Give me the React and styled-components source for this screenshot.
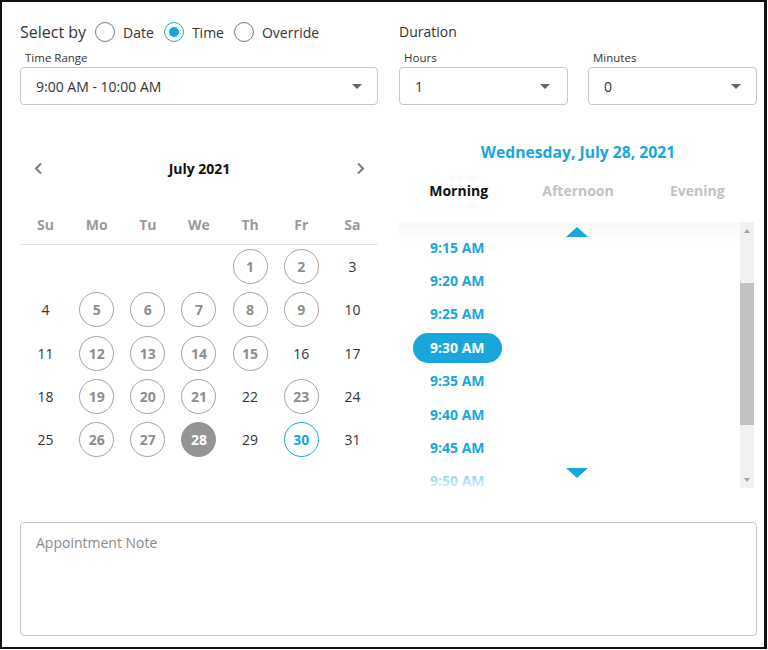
import React from 'react';
import styled, { createGlobalStyle } from 'styled-components';

const GlobalStyle = createGlobalStyle`
  body {
    margin: 0;
    background: #fff;
    font-family: "Open Sans", "Noto Sans", sans-serif;
    color: #333;
  }
`;

const BLUE = '#18a6dc';

const Frame = styled.div`
  box-sizing: border-box;
  width: 767px;
  height: 649px;
  border: 2px solid #111;
  border-right-width: 3px;
  padding: 20px 7px 0 18px;
  background: #fff;
`;

const Columns = styled.div`
  display: grid;
  grid-template-columns: 358px 358px;
  column-gap: 21px;
  align-items: start;
`;

const Column = styled.div`
  display: flex;
  flex-direction: column;
`;

const SelectByRow = styled.div`
  height: 20px;
  display: flex;
  align-items: center;
  font-size: 14px;
`;

const SelectByLabel = styled.span`
  font-size: 16px;
  margin-right: 9px;
`;

const RadioOption = styled.label`
  display: flex;
  align-items: center;
  gap: 8px;
  margin-right: 10px;
`;

const RadioCircle = styled.span`
  box-sizing: border-box;
  width: 20px;
  height: 20px;
  border-radius: 50%;
  border: 1.5px solid ${p => (p.checked ? BLUE : '#7a7a7a')};
  display: flex;
  align-items: center;
  justify-content: center;
  &::after {
    content: '';
    width: 10px;
    height: 10px;
    border-radius: 50%;
    background: ${p => (p.checked ? BLUE : 'transparent')};
  }
`;

const SectionTitle = styled.div`
  height: 20px;
  line-height: 20px;
  font-size: 14px;
`;

const FieldGroup = styled.div`
  display: grid;
  grid-template-columns: 169px 169px;
  column-gap: 20px;
`;

const Field = styled.div`
  display: flex;
  flex-direction: column;
`;

const FieldLabel = styled.div`
  font-size: 11.5px;
  line-height: 16px;
  margin: 8px 0 1px 5px;
  color: #333;
`;

const SelectBox = styled.div`
  box-sizing: border-box;
  height: 38px;
  border: 1px solid #c6c6c6;
  border-radius: 4px;
  display: flex;
  align-items: center;
  justify-content: space-between;
  padding: 0 ${p => p.padRight || 15}px 0 ${p => p.padLeft || 15}px;
  font-size: 14px;
  color: #333;
`;

const Caret = styled.span`
  width: 0;
  height: 0;
  border-left: 5px solid transparent;
  border-right: 5px solid transparent;
  border-top: 5px solid #666;
`;

const CalNav = styled.div`
  margin-top: 53px;
  height: 20px;
  display: flex;
  align-items: center;
  justify-content: space-between;
  padding: 0 12px 0 13px;
`;

const MonthTitle = styled.div`
  font-size: 14px;
  font-weight: 700;
  color: #111;
`;

const WeekHeader = styled.div`
  margin-top: 37px;
  display: grid;
  grid-template-columns: repeat(7, 1fr);
  height: 20px;
  line-height: 20px;
  padding-bottom: 9px;
  border-bottom: 1px solid #e2e2e2;
`;

const WeekDay = styled.div`
  text-align: center;
  font-size: 14px;
  font-weight: 700;
  color: #9a9a9a;
`;

const DaysGrid = styled.div`
  display: grid;
  grid-template-columns: repeat(7, 1fr);
  grid-auto-rows: 43.3px;
`;

const DayCell = styled.div`
  display: flex;
  align-items: center;
  justify-content: center;
`;

const dayStyles = {
  plain: `border: none; color: #333; font-weight: 400;`,
  open: `border: 1.5px solid #a3a3a3; color: #8e8e8e; font-weight: 700;`,
  selected: `border: 1.5px solid #949494; background: #949494; color: #fff; font-weight: 700;`,
  today: `border: 1.5px solid ${BLUE}; color: ${BLUE}; font-weight: 700;`,
};

const Day = styled.div`
  box-sizing: border-box;
  width: 35px;
  height: 35px;
  border-radius: 50%;
  display: flex;
  align-items: center;
  justify-content: center;
  font-size: 14px;
  ${p => dayStyles[p.kind]}
`;

const DateTitle = styled.div`
  margin-top: 37px;
  height: 20px;
  line-height: 20px;
  text-align: center;
  font-size: 15.7px;
  font-weight: 700;
  color: ${BLUE};
`;

const Tabs = styled.div`
  margin-top: 19px;
  display: grid;
  grid-template-columns: repeat(3, 1fr);
  height: 20px;
  line-height: 20px;
`;

const Tab = styled.div`
  text-align: center;
  font-size: 14px;
  font-weight: 700;
  color: ${p => (p.active ? '#111' : '#c2c2c2')};
`;

const TimeList = styled.div`
  position: relative;
  margin-top: 21px;
  height: 266px;
  display: flex;
  overflow: hidden;
`;

const TimeItems = styled.div`
  position: relative;
  flex: 1;
  padding-top: 9px;
`;

const TimeRow = styled.div`
  height: 33.4px;
  display: flex;
  align-items: center;
  padding-left: 14px;
`;

const TimeChip = styled.div`
  height: 30px;
  line-height: 30px;
  padding: 0 17px;
  border-radius: 15px;
  font-size: 14px;
  font-weight: 700;
  color: ${p => (p.selected ? '#fff' : BLUE)};
  background: ${p => (p.selected ? BLUE : 'transparent')};
`;

const FadeTop = styled.div`
  position: absolute;
  left: 0;
  right: 0;
  top: 0;
  height: 20px;
  background: linear-gradient(to bottom, #f7f7f7, rgba(255, 255, 255, 0));
`;

const FadeBottom = styled.div`
  position: absolute;
  left: 0;
  right: 0;
  bottom: 0;
  height: 32px;
  background: linear-gradient(to bottom, rgba(255, 255, 255, 0), rgba(255, 255, 255, 0.85));
`;

const ArrowUp = styled.div`
  position: absolute;
  left: 167px;
  top: 5px;
  width: 0;
  height: 0;
  border-left: 11.5px solid transparent;
  border-right: 11.5px solid transparent;
  border-bottom: 10.5px solid ${BLUE};
`;

const ArrowDown = styled.div`
  position: absolute;
  left: 167px;
  top: 246px;
  width: 0;
  height: 0;
  border-left: 11.5px solid transparent;
  border-right: 11.5px solid transparent;
  border-top: 10.5px solid ${BLUE};
`;

const ScrollTrack = styled.div`
  width: 14px;
  margin-right: 3px;
  background: #f1f1f1;
  display: flex;
  flex-direction: column;
`;

const ScrollButton = styled.div`
  height: 17px;
  display: flex;
  align-items: center;
  justify-content: center;
  &::after {
    content: '';
    width: 0;
    height: 0;
    border-left: 3.5px solid transparent;
    border-right: 3.5px solid transparent;
    ${p => (p.down ? 'border-top: 4px solid #a3a3a3;' : 'border-bottom: 4px solid #a3a3a3;')}
  }
`;

const ScrollBody = styled.div`
  flex: 1;
  padding-top: 44px;
`;

const Thumb = styled.div`
  height: 142px;
  background: #c1c1c1;
`;

const NoteArea = styled.textarea`
  display: block;
  box-sizing: border-box;
  margin-top: 34px;
  width: 737px;
  height: 114px;
  border: 1px solid #c6c6c6;
  border-radius: 4px;
  padding: 10px 15px;
  resize: none;
  font-family: "Open Sans", "Noto Sans", sans-serif;
  font-size: 14px;
  line-height: 20px;
  color: #333;
  &::placeholder {
    color: #8a8a8a;
  }
`;

const Chevron = ({ dir }) => (
  <svg width="10" height="13" viewBox="0 0 10 13">
    <polyline
      points={dir === 'left' ? '8,1.5 3,6.5 8,11.5' : '2,1.5 7,6.5 2,11.5'}
      fill="none"
      stroke="#7d7d7d"
      strokeWidth="2"
    />
  </svg>
);

const openDays = [1, 2, 5, 6, 7, 8, 9, 12, 13, 14, 15, 19, 20, 21, 23, 26, 27];

function dayKind(d) {
  if (d === 28) return 'selected';
  if (d === 30) return 'today';
  if (openDays.includes(d)) return 'open';
  return 'plain';
}

const weekDays = ['Su', 'Mo', 'Tu', 'We', 'Th', 'Fr', 'Sa'];
const times = ['9:15 AM', '9:20 AM', '9:25 AM', '9:30 AM', '9:35 AM', '9:40 AM', '9:45 AM', '9:50 AM'];

export default function App() {
  // July 2021 starts on a Thursday
  const cells = [...Array(4).fill(null), ...Array.from({ length: 31 }, (_, i) => i + 1)];

  return (
    <>
      <GlobalStyle />
      <Frame>
        <Columns>
          <Column>
            <SelectByRow>
              <SelectByLabel>Select by</SelectByLabel>
              <RadioOption><RadioCircle />Date</RadioOption>
              <RadioOption><RadioCircle checked />Time</RadioOption>
              <RadioOption><RadioCircle />Override</RadioOption>
            </SelectByRow>
            <FieldLabel>Time Range</FieldLabel>
            <SelectBox>
              9:00 AM - 10:00 AM
              <Caret />
            </SelectBox>
          </Column>
          <Column>
            <SectionTitle>Duration</SectionTitle>
            <FieldGroup>
              <Field>
                <FieldLabel>Hours</FieldLabel>
                <SelectBox padRight={17}>1<Caret /></SelectBox>
              </Field>
              <Field>
                <FieldLabel>Minutes</FieldLabel>
                <SelectBox padRight={15}>0<Caret /></SelectBox>
              </Field>
            </FieldGroup>
          </Column>

          <Column>
            <CalNav>
              <Chevron dir="left" />
              <MonthTitle>July 2021</MonthTitle>
              <Chevron dir="right" />
            </CalNav>
            <WeekHeader>
              {weekDays.map(w => <WeekDay key={w}>{w}</WeekDay>)}
            </WeekHeader>
            <DaysGrid>
              {cells.map((d, i) => (
                <DayCell key={i}>
                  {d && <Day kind={dayKind(d)}>{d}</Day>}
                </DayCell>
              ))}
            </DaysGrid>
          </Column>
          <Column>
            <DateTitle>Wednesday, July 28, 2021</DateTitle>
            <Tabs>
              <Tab active>Morning</Tab>
              <Tab>Afternoon</Tab>
              <Tab>Evening</Tab>
            </Tabs>
            <TimeList>
              <TimeItems>
                {times.map(t => (
                  <TimeRow key={t}>
                    <TimeChip selected={t === '9:30 AM'}>{t}</TimeChip>
                  </TimeRow>
                ))}
                <FadeTop />
                <FadeBottom />
              </TimeItems>
              <ScrollTrack>
                <ScrollButton />
                <ScrollBody><Thumb /></ScrollBody>
                <ScrollButton down />
              </ScrollTrack>
              <ArrowUp />
              <ArrowDown />
            </TimeList>
          </Column>
        </Columns>
        <NoteArea placeholder="Appointment Note" />
      </Frame>
    </>
  );
}
